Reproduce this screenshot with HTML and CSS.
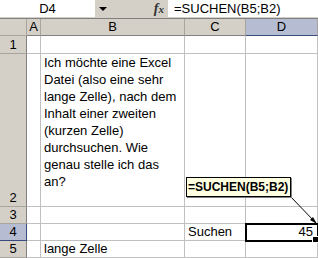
FILE: index.html
```html
<!DOCTYPE html>
<html>
<head>
<meta charset="utf-8">
<link rel="stylesheet" href="styles.css">
</head>
<body>
<div class="app">
  <div class="fbar">
    <div class="namebox">D4</div>
    <div class="dd"><span class="tri"></span></div>
    <div class="fx">f<span class="fxx">x</span></div>
    <div class="formula">=SUCHEN(B5;B2)</div>
  </div>
  <div class="grid">
    <div class="hd corner"></div>
    <div class="hd col">A</div>
    <div class="hd col">B</div>
    <div class="hd col">C</div>
    <div class="hd col sel">D</div>

    <div class="hd row">1</div>
    <div class="c"></div><div class="c"></div><div class="c"></div><div class="c"></div>

    <div class="hd row">2</div>
    <div class="c"></div>
    <div class="c wrap">Ich möchte eine Excel Datei (also eine sehr lange Zelle), nach dem Inhalt einer zweiten (kurzen Zelle) durchsuchen. Wie genau stelle ich das an?</div>
    <div class="c"></div><div class="c"></div>

    <div class="hd row">3</div>
    <div class="c"></div><div class="c"></div><div class="c"></div><div class="c"></div>

    <div class="hd row sel">4</div>
    <div class="c"></div><div class="c"></div><div class="c">Suchen</div>
    <div class="c active">45</div>

    <div class="hd row">5</div>
    <div class="c"></div><div class="c">lange Zelle</div><div class="c"></div><div class="c"></div>
  </div>
  <svg class="arrow" width="318" height="258" viewBox="0 0 318 258">
    <line x1="290" y1="196" x2="315" y2="222" stroke="#000" stroke-width="1"/>
    <polygon points="317,224 310,220 313,217" fill="#000"/>
  </svg>
  <div class="callout">=SUCHEN(B5;B2)</div>
</div>
</body>
</html>
```
FILE: styles.css
```css
html, body {
  margin: 0;
  padding: 0;
  background: #fff;
}
.app {
  position: relative;
  width: 318px;
  height: 258px;
  overflow: hidden;
  font-family: "Liberation Sans", Arial, sans-serif;
  font-size: 13px;
  color: #000;
}
.fbar {
  height: 19px;
  background: #d4d0c8;
  display: flex;
  align-items: flex-start;
}
.namebox {
  width: 95px;
  height: 17px;
  background: #fff;
  text-align: center;
  line-height: 17px;
}
.dd {
  width: 22px;
  height: 17px;
  display: flex;
  align-items: center;
  justify-content: center;
}
.tri {
  width: 0;
  height: 0;
  border-left: 4px solid transparent;
  border-right: 4px solid transparent;
  border-top: 4px solid #000;
  margin-right: 6px;
}
.fx {
  width: 51px;
  height: 17px;
  text-align: right;
  padding-right: 4px;
  box-sizing: border-box;
  font-family: "Liberation Serif", serif;
  font-style: italic;
  font-weight: bold;
  font-size: 14px;
  line-height: 17px;
  color: #333;
}
.fxx {
  font-size: 11px;
}
.formula {
  flex: 1;
  height: 17px;
  background: #fff;
  line-height: 17px;
  padding-left: 6px;
}
.grid {
  display: grid;
  grid-template-columns: 27px 14px 144px 61px 1fr;
  grid-template-rows: 17px 18px 153px 17px 17px 17px;
  border-top: 1px solid #808080;
  margin-top: -1px;
}
.hd {
  background: #d4d0c8;
  border-right: 1px solid #a8a59e;
  border-bottom: 1px solid #a8a59e;
  box-sizing: border-box;
  text-align: center;
  line-height: 16px;
}
.hd.col {
  border-bottom-color: #808080;
}
.hd.row {
  display: flex;
  align-items: flex-end;
  justify-content: center;
  line-height: 16px;
  border-right-color: #808080;
}
.hd.sel {
  background: #b6bdd3;
  border-bottom-color: #3a4c7c;
}
.hd.row.sel {
  border-right-color: #3a4c7c;
}
.c {
  border-right: 1px solid #c0c0c0;
  border-bottom: 1px solid #c0c0c0;
  box-sizing: border-box;
  padding: 0 2px 0 3px;
  line-height: 16px;
  white-space: nowrap;
}
.c.wrap {
  white-space: normal;
  line-height: 17px;
  padding-top: 0;
}
.c.active {
  text-align: right;
  outline: 2px solid #000;
  outline-offset: -1px;
  position: relative;
  padding-right: 4px;
}
.c.active::after {
  content: "";
  position: absolute;
  right: -2px;
  bottom: -3px;
  width: 5px;
  height: 5px;
  background: #000;
  border: 1px solid #fff;
}
.arrow {
  position: absolute;
  left: 0;
  top: 0;
}
.callout {
  position: absolute;
  left: 186px;
  top: 177px;
  width: 105px;
  height: 20px;
  box-sizing: border-box;
  background: #ffffe1;
  border: 1px solid #000;
  font-weight: bold;
  font-size: 12px;
  line-height: 18px;
  padding-left: 1px;
  white-space: nowrap;
  box-shadow: 1px 1px 0 #808080;
}
```
